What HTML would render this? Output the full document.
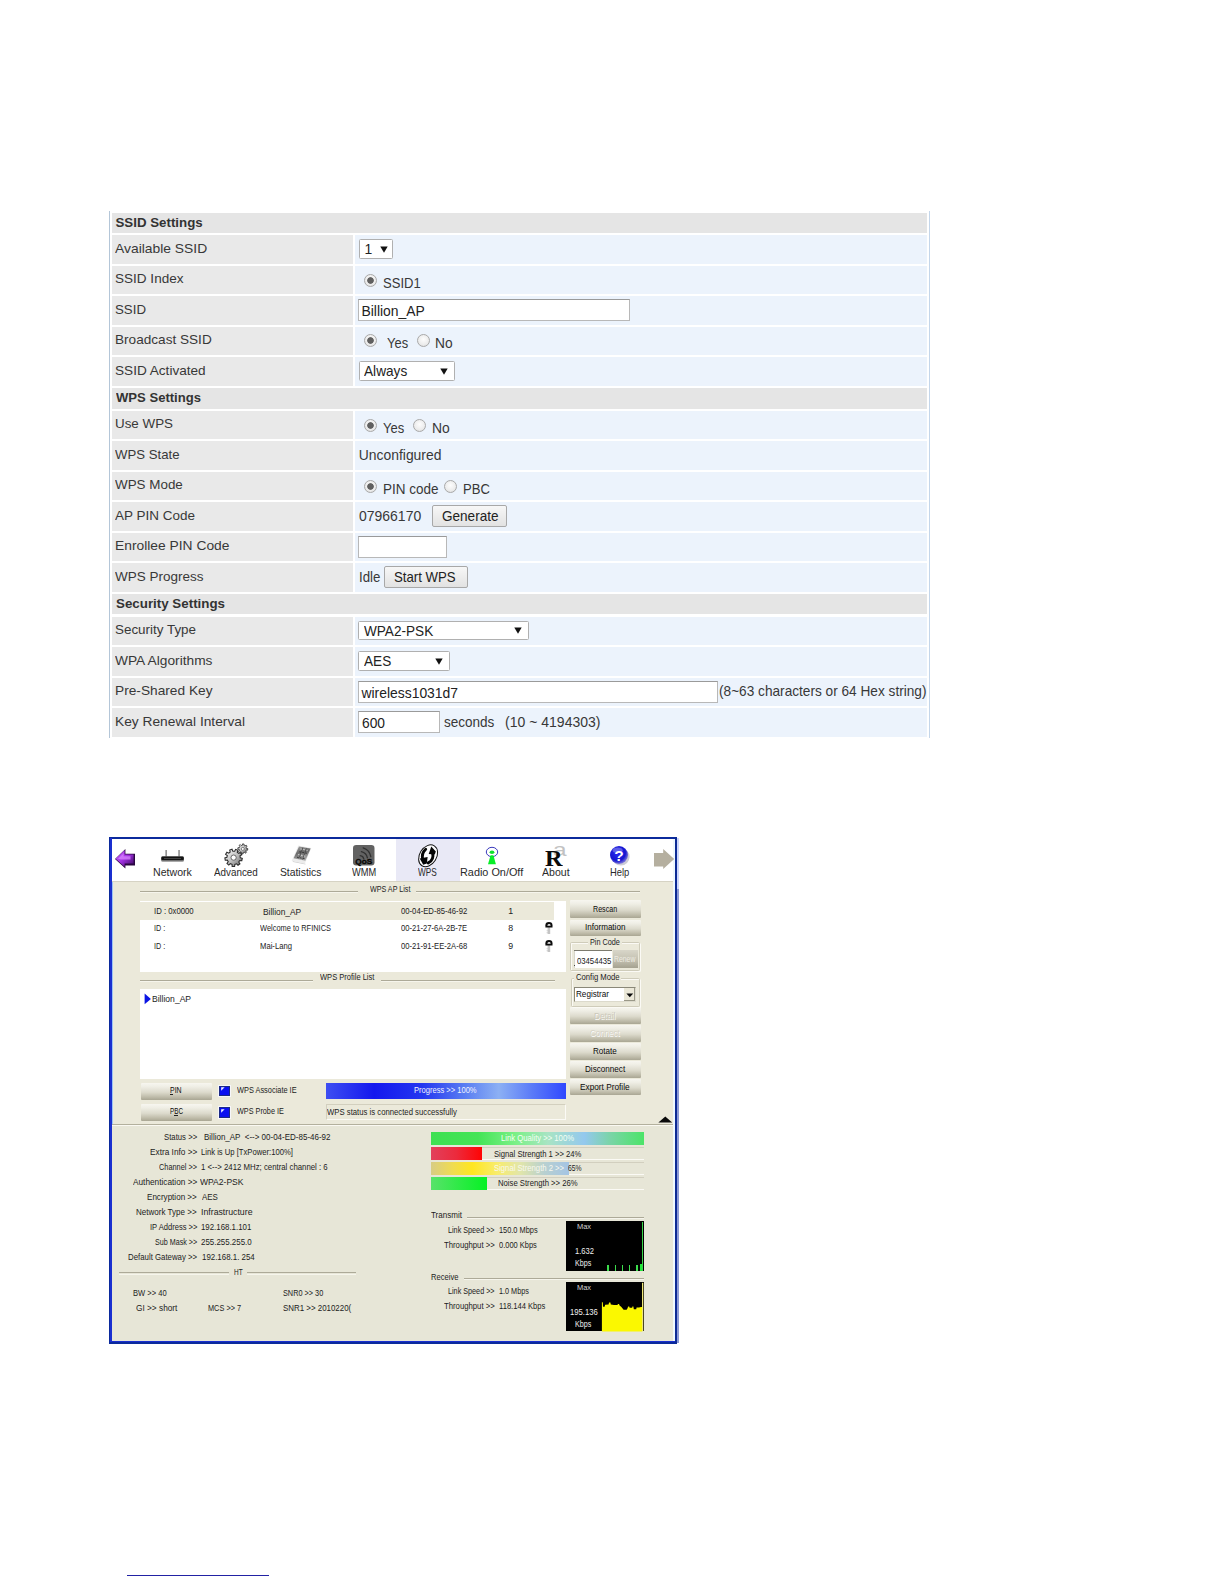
<!DOCTYPE html><html><head><meta charset="utf-8"><title>page</title><style>

html,body{margin:0;padding:0;background:#fff;}
body{width:1224px;height:1584px;position:relative;overflow:hidden;font-family:"Liberation Sans",sans-serif;}
div,span,svg{position:absolute;box-sizing:border-box;}
span{white-space:pre;transform-origin:0 50%;display:block;}

</style></head><body>
<div style="left:109.20px;top:211.00px;width:1.20px;height:527.00px;background:#b4c6d8;"></div>
<div style="left:929.00px;top:211.00px;width:1.00px;height:527.00px;background:#c4d6ea;"></div>
<div style="left:112.30px;top:212.70px;width:814.50px;height:20.60px;background:#e5e5e5;"></div>
<span style="left:115.50px;top:214.72px;font-size:13.3px;line-height:15.96px;color:#333;font-weight:bold;">SSID Settings</span>
<div style="left:112.30px;top:235.35px;width:241.00px;height:28.45px;background:#e9e9e9;"></div>
<div style="left:355.40px;top:235.35px;width:571.40px;height:28.45px;background:#ecf3fc;"></div>
<span style="left:115.00px;top:240.84px;font-size:13.6px;line-height:16.32px;color:#383838;transform:scaleX(1.0195);">Available SSID</span>
<div style="left:359.00px;top:239.30px;width:33.60px;height:19.50px;background:#fff;border:1px solid #b0b0b0;border-radius:1.5px;"></div>
<span style="left:364.50px;top:241.41px;font-size:13.9px;line-height:16.68px;color:#222;">1</span>
<svg style="left:380.00px;top:245.85px" width="8" height="7" viewBox="0 0 8 7"><path d="M0.3 0.5 L7.7 0.5 L4 6.7 Z" fill="#111"/></svg>
<div style="left:112.30px;top:265.85px;width:241.00px;height:28.45px;background:#e9e9e9;"></div>
<div style="left:355.40px;top:265.85px;width:571.40px;height:28.45px;background:#ecf3fc;"></div>
<span style="left:115.00px;top:271.34px;font-size:13.6px;line-height:16.32px;color:#383838;transform:scaleX(0.9961);">SSID Index</span>
<div style="left:364.10px;top:274.20px;width:13.2px;height:13.2px;border-radius:50%;border:1.1px solid #a9a9a9;background:radial-gradient(circle at 50% 50%,#606060 0,#606060 2.9px,rgba(96,96,96,0) 3.7px),radial-gradient(circle at 50% 40%,#fdfdfd 0%,#ececec 60%,#d6d6d6 100%);"></div>
<span style="left:382.50px;top:274.66px;font-size:13.9px;line-height:16.68px;color:#383838;transform:scaleX(0.9388);">SSID1</span>
<div style="left:112.30px;top:296.35px;width:241.00px;height:28.45px;background:#e9e9e9;"></div>
<div style="left:355.40px;top:296.35px;width:571.40px;height:28.45px;background:#ecf3fc;"></div>
<span style="left:115.00px;top:301.84px;font-size:13.6px;line-height:16.32px;color:#383838;transform:scaleX(0.9769);">SSID</span>
<div style="left:358.30px;top:299.20px;width:271.50px;height:22.20px;background:#fff;border:1px solid #b8b8b8;border-top-color:#9a9a9a;"></div>
<span style="left:361.50px;top:303.16px;font-size:13.9px;line-height:16.68px;color:#222;">Billion_AP</span>
<div style="left:112.30px;top:326.85px;width:241.00px;height:28.45px;background:#e9e9e9;"></div>
<div style="left:355.40px;top:326.85px;width:571.40px;height:28.45px;background:#ecf3fc;"></div>
<span style="left:115.00px;top:332.34px;font-size:13.6px;line-height:16.32px;color:#383838;">Broadcast SSID</span>
<div style="left:363.90px;top:334.20px;width:13.2px;height:13.2px;border-radius:50%;border:1.1px solid #a9a9a9;background:radial-gradient(circle at 50% 50%,#606060 0,#606060 2.9px,rgba(96,96,96,0) 3.7px),radial-gradient(circle at 50% 40%,#fdfdfd 0%,#ececec 60%,#d6d6d6 100%);"></div>
<span style="left:386.50px;top:335.46px;font-size:13.9px;line-height:16.68px;color:#383838;transform:scaleX(0.9307);">Yes</span>
<div style="left:416.80px;top:334.20px;width:13.2px;height:13.2px;border-radius:50%;border:1.1px solid #a9a9a9;background:radial-gradient(circle at 50% 40%,#fdfdfd 0%,#ececec 60%,#d6d6d6 100%);"></div>
<span style="left:435.40px;top:335.46px;font-size:13.9px;line-height:16.68px;color:#383838;transform:scaleX(0.9907);">No</span>
<div style="left:112.30px;top:357.35px;width:241.00px;height:28.45px;background:#e9e9e9;"></div>
<div style="left:355.40px;top:357.35px;width:571.40px;height:28.45px;background:#ecf3fc;"></div>
<span style="left:115.00px;top:362.84px;font-size:13.6px;line-height:16.32px;color:#383838;">SSID Activated</span>
<div style="left:358.80px;top:361.20px;width:96.40px;height:19.80px;background:#fff;border:1px solid #b0b0b0;border-radius:1.5px;"></div>
<span style="left:364.30px;top:363.46px;font-size:13.9px;line-height:16.68px;color:#222;transform:scaleX(0.9818);">Always</span>
<svg style="left:440.20px;top:367.90px" width="8" height="7" viewBox="0 0 8 7"><path d="M0.3 0.5 L7.7 0.5 L4 6.7 Z" fill="#111"/></svg>
<div style="left:112.30px;top:388.10px;width:814.50px;height:20.60px;background:#e5e5e5;"></div>
<span style="left:115.50px;top:390.12px;font-size:13.3px;line-height:15.96px;color:#333;font-weight:bold;transform:scaleX(0.9834);">WPS Settings</span>
<div style="left:112.30px;top:410.85px;width:241.00px;height:28.45px;background:#e9e9e9;"></div>
<div style="left:355.40px;top:410.85px;width:571.40px;height:28.45px;background:#ecf3fc;"></div>
<span style="left:115.00px;top:416.34px;font-size:13.6px;line-height:16.32px;color:#383838;transform:scaleX(0.9844);">Use WPS</span>
<div style="left:363.90px;top:418.50px;width:13.2px;height:13.2px;border-radius:50%;border:1.1px solid #a9a9a9;background:radial-gradient(circle at 50% 50%,#606060 0,#606060 2.9px,rgba(96,96,96,0) 3.7px),radial-gradient(circle at 50% 40%,#fdfdfd 0%,#ececec 60%,#d6d6d6 100%);"></div>
<span style="left:383.00px;top:419.66px;font-size:13.9px;line-height:16.68px;color:#383838;transform:scaleX(0.9351);">Yes</span>
<div style="left:412.90px;top:418.50px;width:13.2px;height:13.2px;border-radius:50%;border:1.1px solid #a9a9a9;background:radial-gradient(circle at 50% 40%,#fdfdfd 0%,#ececec 60%,#d6d6d6 100%);"></div>
<span style="left:432.00px;top:419.66px;font-size:13.9px;line-height:16.68px;color:#383838;">No</span>
<div style="left:112.30px;top:441.35px;width:241.00px;height:28.45px;background:#e9e9e9;"></div>
<div style="left:355.40px;top:441.35px;width:571.40px;height:28.45px;background:#ecf3fc;"></div>
<span style="left:115.00px;top:446.84px;font-size:13.6px;line-height:16.32px;color:#383838;transform:scaleX(0.9702);">WPS State</span>
<span style="left:358.80px;top:446.66px;font-size:13.9px;line-height:16.68px;color:#383838;">Unconfigured</span>
<div style="left:112.30px;top:471.85px;width:241.00px;height:28.45px;background:#e9e9e9;"></div>
<div style="left:355.40px;top:471.85px;width:571.40px;height:28.45px;background:#ecf3fc;"></div>
<span style="left:115.00px;top:477.34px;font-size:13.6px;line-height:16.32px;color:#383838;transform:scaleX(0.9862);">WPS Mode</span>
<div style="left:363.90px;top:480.00px;width:13.2px;height:13.2px;border-radius:50%;border:1.1px solid #a9a9a9;background:radial-gradient(circle at 50% 50%,#606060 0,#606060 2.9px,rgba(96,96,96,0) 3.7px),radial-gradient(circle at 50% 40%,#fdfdfd 0%,#ececec 60%,#d6d6d6 100%);"></div>
<span style="left:382.60px;top:480.66px;font-size:13.9px;line-height:16.68px;color:#383838;transform:scaleX(0.9695);">PIN code</span>
<div style="left:444.30px;top:480.00px;width:13.2px;height:13.2px;border-radius:50%;border:1.1px solid #a9a9a9;background:radial-gradient(circle at 50% 40%,#fdfdfd 0%,#ececec 60%,#d6d6d6 100%);"></div>
<span style="left:463.00px;top:480.66px;font-size:13.9px;line-height:16.68px;color:#383838;transform:scaleX(0.9383);">PBC</span>
<div style="left:112.30px;top:502.35px;width:241.00px;height:28.45px;background:#e9e9e9;"></div>
<div style="left:355.40px;top:502.35px;width:571.40px;height:28.45px;background:#ecf3fc;"></div>
<span style="left:115.00px;top:507.84px;font-size:13.6px;line-height:16.32px;color:#383838;transform:scaleX(0.9924);">AP PIN Code</span>
<span style="left:358.80px;top:507.96px;font-size:13.9px;line-height:16.68px;color:#383838;transform:scaleX(1.0063);">07966170</span>
<div style="left:432.00px;top:505.20px;width:75.30px;height:22.10px;background:linear-gradient(#f7f7f7,#e2e2e2);border:1px solid #a8a8a8;border-radius:2px;"></div>
<span style="left:441.50px;top:508.31px;font-size:13.9px;line-height:16.68px;color:#222;transform:scaleX(0.9755);">Generate</span>
<div style="left:112.30px;top:532.85px;width:241.00px;height:28.45px;background:#e9e9e9;"></div>
<div style="left:355.40px;top:532.85px;width:571.40px;height:28.45px;background:#ecf3fc;"></div>
<span style="left:115.00px;top:538.34px;font-size:13.6px;line-height:16.32px;color:#383838;transform:scaleX(1.0169);">Enrollee PIN Code</span>
<div style="left:358.30px;top:535.60px;width:88.40px;height:22.10px;background:#fff;border:1px solid #b8b8b8;border-top-color:#9a9a9a;"></div>
<div style="left:112.30px;top:563.35px;width:241.00px;height:28.45px;background:#e9e9e9;"></div>
<div style="left:355.40px;top:563.35px;width:571.40px;height:28.45px;background:#ecf3fc;"></div>
<span style="left:115.00px;top:568.84px;font-size:13.6px;line-height:16.32px;color:#383838;transform:scaleX(0.9928);">WPS Progress</span>
<span style="left:358.80px;top:568.86px;font-size:13.9px;line-height:16.68px;color:#383838;transform:scaleX(0.9551);">Idle</span>
<div style="left:384.40px;top:566.40px;width:83.60px;height:21.90px;background:linear-gradient(#f7f7f7,#e2e2e2);border:1px solid #a8a8a8;border-radius:2px;"></div>
<span style="left:393.80px;top:569.41px;font-size:13.9px;line-height:16.68px;color:#222;transform:scaleX(0.9515);">Start WPS</span>
<div style="left:112.30px;top:593.90px;width:814.50px;height:20.60px;background:#e5e5e5;"></div>
<span style="left:115.50px;top:595.92px;font-size:13.3px;line-height:15.96px;color:#333;font-weight:bold;transform:scaleX(1.0035);">Security Settings</span>
<div style="left:112.30px;top:616.85px;width:241.00px;height:28.45px;background:#e9e9e9;"></div>
<div style="left:355.40px;top:616.85px;width:571.40px;height:28.45px;background:#ecf3fc;"></div>
<span style="left:115.00px;top:622.34px;font-size:13.6px;line-height:16.32px;color:#383838;transform:scaleX(0.9865);">Security Type</span>
<div style="left:358.30px;top:620.50px;width:170.50px;height:19.70px;background:#fff;border:1px solid #b0b0b0;border-radius:1.5px;"></div>
<span style="left:363.80px;top:622.71px;font-size:13.9px;line-height:16.68px;color:#222;transform:scaleX(0.9779);">WPA2-PSK</span>
<svg style="left:513.80px;top:627.15px" width="8" height="7" viewBox="0 0 8 7"><path d="M0.3 0.5 L7.7 0.5 L4 6.7 Z" fill="#111"/></svg>
<div style="left:112.30px;top:647.35px;width:241.00px;height:28.45px;background:#e9e9e9;"></div>
<div style="left:355.40px;top:647.35px;width:571.40px;height:28.45px;background:#ecf3fc;"></div>
<span style="left:115.00px;top:652.84px;font-size:13.6px;line-height:16.32px;color:#383838;transform:scaleX(1.0109);">WPA Algorithms</span>
<div style="left:358.30px;top:651.20px;width:91.50px;height:19.80px;background:#fff;border:1px solid #b0b0b0;border-radius:1.5px;"></div>
<span style="left:363.80px;top:653.46px;font-size:13.9px;line-height:16.68px;color:#222;transform:scaleX(0.9785);">AES</span>
<svg style="left:434.80px;top:657.90px" width="8" height="7" viewBox="0 0 8 7"><path d="M0.3 0.5 L7.7 0.5 L4 6.7 Z" fill="#111"/></svg>
<div style="left:112.30px;top:677.85px;width:241.00px;height:28.45px;background:#e9e9e9;"></div>
<div style="left:355.40px;top:677.85px;width:571.40px;height:28.45px;background:#ecf3fc;"></div>
<span style="left:115.00px;top:683.34px;font-size:13.6px;line-height:16.32px;color:#383838;transform:scaleX(1.0081);">Pre-Shared Key</span>
<div style="left:358.30px;top:680.60px;width:359.30px;height:22.10px;background:#fff;border:1px solid #b8b8b8;border-top-color:#9a9a9a;"></div>
<span style="left:361.50px;top:684.51px;font-size:13.9px;line-height:16.68px;color:#222;">wireless1031d7</span>
<span style="left:718.80px;top:683.46px;font-size:13.9px;line-height:16.68px;color:#383838;transform:scaleX(0.9827);">(8~63 characters or 64 Hex string)</span>
<div style="left:112.30px;top:708.35px;width:241.00px;height:28.45px;background:#e9e9e9;"></div>
<div style="left:355.40px;top:708.35px;width:571.40px;height:28.45px;background:#ecf3fc;"></div>
<span style="left:115.00px;top:713.84px;font-size:13.6px;line-height:16.32px;color:#383838;transform:scaleX(1.0120);">Key Renewal Interval</span>
<div style="left:358.30px;top:710.70px;width:81.60px;height:22.10px;background:#fff;border:1px solid #b8b8b8;border-top-color:#9a9a9a;"></div>
<span style="left:361.50px;top:714.61px;font-size:13.9px;line-height:16.68px;color:#222;transform:scaleX(0.9919);">600</span>
<span style="left:443.80px;top:713.66px;font-size:13.9px;line-height:16.68px;color:#383838;transform:scaleX(0.9739);">seconds</span>
<span style="left:505.20px;top:713.66px;font-size:13.9px;line-height:16.68px;color:#383838;transform:scaleX(1.0092);">(10 ~ 4194303)</span>
<div style="left:127.00px;top:1574.80px;width:142.20px;height:1.50px;background:#2222a4;"></div>
<div style="left:109.00px;top:837.00px;width:568.20px;height:506.80px;background:#0b2a9c;"></div>
<div style="left:109.60px;top:838.00px;width:565.80px;height:504.00px;background:#1a2fd0;"></div>
<div style="left:112.00px;top:837.00px;width:565.20px;height:2.00px;background:#0b2a9c;"></div>
<div style="left:675.00px;top:837.00px;width:2.20px;height:506.80px;background:#0c2a94;"></div>
<div style="left:112.20px;top:839.00px;width:563.00px;height:502.40px;background:#ebe9da;"></div>
<div style="left:111.70px;top:839.00px;width:0.70px;height:502.40px;background:#9cc4f4;"></div>
<div style="left:112.20px;top:839.00px;width:563.00px;height:42.00px;background:#fff;"></div>
<div style="left:112.20px;top:880.80px;width:563.00px;height:1.00px;background:#d6d3c4;"></div>
<div style="left:396.20px;top:839.00px;width:63.40px;height:42.00px;background:#e9e9f6;"></div>
<div style="left:677.20px;top:871.80px;width:2.20px;height:1.00px;background:#4a5ca8;"></div>
<div style="left:677.20px;top:838.00px;width:1.60px;height:51.00px;background:#ccd6fb;"></div>
<div style="left:677.20px;top:889.00px;width:1.60px;height:454.40px;background:#8c9ad6;"></div>
<div style="left:673.40px;top:839.00px;width:1.80px;height:502.40px;background:#eef8ff;"></div>
<span style="left:152.90px;top:866.76px;font-size:10.4px;line-height:12.48px;color:#2a2a2a;transform:scaleX(1.0207);">Network</span>
<span style="left:214.30px;top:866.76px;font-size:10.4px;line-height:12.48px;color:#2a2a2a;transform:scaleX(0.9477);">Advanced</span>
<span style="left:279.90px;top:866.76px;font-size:10.4px;line-height:12.48px;color:#2a2a2a;">Statistics</span>
<span style="left:351.90px;top:866.76px;font-size:10.4px;line-height:12.48px;color:#2a2a2a;transform:scaleX(0.8922);">WMM</span>
<span style="left:418.40px;top:866.76px;font-size:10.4px;line-height:12.48px;color:#2a2a2a;transform:scaleX(0.7942);">WPS</span>
<span style="left:459.80px;top:866.76px;font-size:10.4px;line-height:12.48px;color:#2a2a2a;transform:scaleX(1.0454);">Radio On/Off</span>
<span style="left:541.60px;top:866.76px;font-size:10.4px;line-height:12.48px;color:#2a2a2a;transform:scaleX(1.0163);">About</span>
<span style="left:609.70px;top:866.76px;font-size:10.4px;line-height:12.48px;color:#2a2a2a;transform:scaleX(0.9029);">Help</span>
<svg style="left:113px;top:847px" width="24" height="24" viewBox="0 0 24 24"><defs><linearGradient id="pa" x1="0" y1="0" x2="1" y2="1"><stop offset="0" stop-color="#d070ff"/><stop offset="0.5" stop-color="#a030e0"/><stop offset="1" stop-color="#38085c"/></linearGradient></defs>
<path d="M2 12 L12.4 2 L12.4 6.8 L22 6.8 L22 18.6 L12.4 18.6 L12.4 21.6 Z" fill="#2a0640"/>
<path d="M2.6 11.8 L11.6 3.2 L11.6 7.6 L20.6 7.6 L20.6 16.6 L11.6 16.6 L11.6 19.8 Z" fill="url(#pa)"/>
<path d="M5 11.8 L10.6 6.6 L10.6 9.2 L17.5 9.2 L17.5 12.5 L8 12.5 Z" fill="#d884ff" opacity="0.75"/></svg>
<svg style="left:159px;top:848px" width="28" height="16" viewBox="0 0 28 16"><rect x="6.4" y="2" width="1.5" height="7" fill="#8a8a8a"/><rect x="19.3" y="2" width="1.5" height="7" fill="#8a8a8a"/>
<rect x="2.1" y="8.3" width="22.9" height="5.5" rx="1.6" fill="#8e8e8e"/><rect x="2.3" y="8.5" width="22.5" height="3.8" rx="1.4" fill="#151515"/><rect x="5" y="10" width="17" height="0.9" fill="#4a4a4a"/></svg>
<svg style="left:220px;top:839px" width="32" height="32" viewBox="0 0 32 32"><defs><linearGradient id="gg" x1="0" y1="0" x2="1" y2="1"><stop offset="0" stop-color="#ffffff"/><stop offset="0.5" stop-color="#c2c2c2"/><stop offset="1" stop-color="#666666"/></linearGradient></defs>
<path d="M26.37 9.41 L27.79 9.61 L27.64 11.17 L26.20 11.09 L25.67 12.08 L26.53 13.23 L25.32 14.22 L24.37 13.14 L23.29 13.47 L23.09 14.89 L21.53 14.74 L21.61 13.30 L20.62 12.77 L19.47 13.63 L18.48 12.42 L19.56 11.47 L19.23 10.39 L17.81 10.19 L17.96 8.63 L19.40 8.71 L19.93 7.72 L19.07 6.57 L20.28 5.58 L21.23 6.66 L22.31 6.33 L22.51 4.91 L24.07 5.06 L23.99 6.50 L24.98 7.03 L26.13 6.17 L27.12 7.38 L26.04 8.33 Z" fill="url(#gg)" stroke="#3a3a3a" stroke-width="0.9"/><circle cx="22.8" cy="9.9" r="1.5" fill="#fff" stroke="#444" stroke-width="0.6"/>
<path d="M20.30 18.74 L22.28 19.32 L21.80 21.70 L19.75 21.47 L18.77 23.06 L19.92 24.78 L18.02 26.29 L16.59 24.79 L14.83 25.39 L14.59 27.44 L12.17 27.38 L12.04 25.32 L10.30 24.63 L8.80 26.06 L6.99 24.45 L8.22 22.79 L7.33 21.15 L5.26 21.28 L4.90 18.88 L6.91 18.40 L7.28 16.57 L5.62 15.34 L6.88 13.27 L8.74 14.19 L10.20 13.03 L9.71 11.02 L12.01 10.25 L12.84 12.14 L14.70 12.19 L15.62 10.34 L17.88 11.22 L17.29 13.21 L18.69 14.45 L20.59 13.62 L21.75 15.75 L20.02 16.89 Z" fill="url(#gg)" stroke="#2c2c2c" stroke-width="1.1"/><circle cx="13.6" cy="18.6" r="2.6" fill="#fff" stroke="#3a3a3a" stroke-width="0.7"/></svg>
<svg style="left:288px;top:842px" width="28" height="26" viewBox="0 0 28 26"><defs><linearGradient id="sg" x1="0" y1="0" x2="0.3" y2="1"><stop offset="0" stop-color="#a2a2a2"/><stop offset="0.5" stop-color="#6c6c6c"/><stop offset="1" stop-color="#a8a8a8"/></linearGradient></defs>
<path d="M5.2 19.9 L17.6 22.6 L17.2 21.6 L4.4 18.8 Z" fill="#cfcfcf"/>
<path d="M10.3 3.6 L23.4 6 L16.8 21.8 L3.6 18.9 Z" fill="#ececec"/>
<path d="M11 4.4 L22.6 6.5 L17.4 18.8 L5.6 16.3 Z" fill="url(#sg)"/>
<path d="M12.5 7 L20 8.4 M10.2 12.6 L17.8 14.2" stroke="#e0e0e0" stroke-width="1" stroke-dasharray="1.4 1.5" fill="none"/>
<path d="M11.3 9.8 L19 11.3 M9 15.2 L16.6 16.8" stroke="#3a3a3a" stroke-width="1.1" stroke-dasharray="1.8 1.2" fill="none"/>
<path d="M14.8 5.6 L10.8 16.6 M18.6 6.4 L14.4 17.6" stroke="#404040" stroke-width="0.9" fill="none" opacity="0.75"/></svg>
<svg style="left:352px;top:844px" width="24" height="23" viewBox="0 0 24 23"><rect x="1" y="0.9" width="21.5" height="20.5" rx="3.2" fill="#626262"/>
<g fill="none" stroke="#303030" stroke-width="1.3" stroke-linecap="round"><path d="M8.2 11.6 A4.2 4.2 0 0 1 11.8 14.8"/><path d="M9.4 7.6 A8 8 0 0 1 15.4 13.8"/><path d="M11.2 3.8 A11.6 11.6 0 0 1 18.8 12.6"/></g>
<text x="11.8" y="19.9" font-family="Liberation Sans" font-weight="bold" font-size="8" text-anchor="middle" fill="#060606" stroke="#060606" stroke-width="0.3" textLength="17.0" lengthAdjust="spacingAndGlyphs">QoS</text></svg>
<svg style="left:415px;top:842px" width="26" height="27" viewBox="0 0 26 27"><g transform="rotate(32 13.1 13.8)"><ellipse cx="13.1" cy="13.8" rx="8.5" ry="11.7" fill="#fff" fill-opacity="0.9" stroke="#141414" stroke-width="1.0"/></g>
<path d="M10.7 7.3 Q6.0 11.6 7.9 17.6" stroke="#050505" stroke-width="2.9" fill="none" stroke-linecap="round"/>
<path d="M4.7 16.6 L12.6 15.0 L11.8 21.4 L8.2 22.8 Z" fill="#050505"/>
<path d="M13.2 20.9 Q19.4 18.0 17.5 10.4" stroke="#050505" stroke-width="2.9" fill="none" stroke-linecap="round"/>
<path d="M16.3 4.6 L20.8 9.6 L19.8 12.6 L13.7 11.9 Z" fill="#050505"/></svg>
<svg style="left:483px;top:844px" width="18" height="24" viewBox="0 0 18 24"><ellipse cx="9" cy="8" rx="5.7" ry="4.7" fill="none" stroke="#2424b4" stroke-width="0.9"/><ellipse cx="9" cy="8.2" rx="2.4" ry="1.7" fill="#10e030"/><path d="M7.6 11.2 L10.4 11.2 L12.9 20.2 L5 20.2 Z" fill="#08ee28"/></svg>
<span style="left:552.60px;top:838.50px;font-size:18.5px;line-height:22.20px;color:#c2c2c2;transform:scaleX(1.3208);">a</span>
<span style="left:545.20px;top:845.20px;font-size:23.0px;line-height:27.60px;color:#0a0a0a;font-weight:bold;font-family:'Liberation Serif',serif;transform:scaleX(1.0586);">R</span>
<svg style="left:607px;top:843px" width="26" height="26" viewBox="0 0 26 26"><defs><radialGradient id="hg" cx="0.42" cy="0.38" r="0.62"><stop offset="0" stop-color="#2a2af4"/><stop offset="0.7" stop-color="#1616d0"/><stop offset="1" stop-color="#7a74d8"/></radialGradient></defs>
<ellipse cx="13.8" cy="13.8" rx="8.8" ry="8.6" fill="#b8b8c4" opacity="0.7"/><circle cx="12" cy="12" r="9" fill="url(#hg)"/><ellipse cx="10.6" cy="7.2" rx="5" ry="2.6" fill="#fff" opacity="0.28"/>
<text x="12" y="17.6" font-family="Liberation Sans" font-weight="bold" font-size="15.5" text-anchor="middle" fill="#fff">?</text></svg>
<svg style="left:652px;top:847px" width="24" height="24" viewBox="0 0 24 24"><path d="M2 5.9 L11.2 5.9 L11.2 1.9 L22.2 12 L11.2 22 L11.2 19.6 L2 19.6 Z" fill="#b5af9f"/></svg>
<div style="left:140.00px;top:891.05px;width:218.00px;height:1.05px;background:#adaa98;"></div>
<div style="left:140.00px;top:892.10px;width:218.00px;height:0.80px;background:#f6f5ec;"></div>
<div style="left:416.00px;top:891.05px;width:224.00px;height:1.05px;background:#adaa98;"></div>
<div style="left:416.00px;top:892.10px;width:224.00px;height:0.80px;background:#f6f5ec;"></div>
<span style="left:369.60px;top:884.32px;font-size:8.8px;line-height:10.56px;color:#1c1c1c;transform:scaleX(0.8126);">WPS AP List</span>
<div style="left:140.00px;top:979.85px;width:173.00px;height:1.05px;background:#adaa98;"></div>
<div style="left:140.00px;top:980.90px;width:173.00px;height:0.80px;background:#f6f5ec;"></div>
<div style="left:381.00px;top:979.85px;width:174.00px;height:1.05px;background:#adaa98;"></div>
<div style="left:381.00px;top:980.90px;width:174.00px;height:0.80px;background:#f6f5ec;"></div>
<span style="left:320.30px;top:972.02px;font-size:8.8px;line-height:10.56px;color:#1c1c1c;transform:scaleX(0.8559);">WPS Profile List</span>
<div style="left:140.00px;top:900.90px;width:425.90px;height:71.30px;background:#fff;"></div>
<div style="left:140.00px;top:901.60px;width:413.60px;height:18.20px;background:#ebe9da;"></div>
<span style="left:153.60px;top:905.72px;font-size:8.8px;line-height:10.56px;color:#1c1c1c;transform:scaleX(0.8822);">ID : 0x0000</span>
<span style="left:262.50px;top:907.12px;font-size:8.8px;line-height:10.56px;color:#1c1c1c;transform:scaleX(0.9524);">Billion_AP</span>
<span style="left:400.80px;top:905.72px;font-size:8.8px;line-height:10.56px;color:#1c1c1c;transform:scaleX(0.8734);">00-04-ED-85-46-92</span>
<span style="left:508.20px;top:905.72px;font-size:8.8px;line-height:10.56px;color:#1c1c1c;">1</span>
<span style="left:153.60px;top:923.12px;font-size:8.8px;line-height:10.56px;color:#1c1c1c;transform:scaleX(0.8183);">ID :</span>
<span style="left:260.00px;top:923.12px;font-size:8.8px;line-height:10.56px;color:#1c1c1c;transform:scaleX(0.8460);">Welcome to RFINICS</span>
<span style="left:400.80px;top:923.12px;font-size:8.8px;line-height:10.56px;color:#1c1c1c;transform:scaleX(0.8678);">00-21-27-6A-2B-7E</span>
<span style="left:508.20px;top:923.12px;font-size:8.8px;line-height:10.56px;color:#1c1c1c;">8</span>
<span style="left:153.60px;top:940.92px;font-size:8.8px;line-height:10.56px;color:#1c1c1c;transform:scaleX(0.8183);">ID :</span>
<span style="left:260.00px;top:940.92px;font-size:8.8px;line-height:10.56px;color:#1c1c1c;transform:scaleX(0.8722);">Mai-Lang</span>
<span style="left:400.80px;top:940.92px;font-size:8.8px;line-height:10.56px;color:#1c1c1c;transform:scaleX(0.8678);">00-21-91-EE-2A-68</span>
<span style="left:508.20px;top:940.92px;font-size:8.8px;line-height:10.56px;color:#1c1c1c;">9</span>
<svg style="left:543.5px;top:920.8px" width="10" height="15" viewBox="0 0 10 15"><rect x="3.6" y="5.6" width="2.6" height="7.4" fill="#c4c4c4"/><rect x="2.6" y="9.2" width="1.4" height="1" fill="#cfcfcf"/><rect x="2.6" y="11.2" width="1.4" height="1" fill="#cfcfcf"/><path d="M1.4 6.6 L1.4 4.2 A3.55 3.3 0 0 1 8.5 4.2 L8.5 6.6 Z" fill="#0c0c0c"/><path d="M3.4 4.5 A1.6 1.4 0 0 1 6.6 4.4 L6.6 4.8 L3.4 4.8 Z" fill="#eeeeee"/></svg>
<svg style="left:543.5px;top:938.8px" width="10" height="15" viewBox="0 0 10 15"><rect x="3.6" y="5.6" width="2.6" height="7.4" fill="#c4c4c4"/><rect x="2.6" y="9.2" width="1.4" height="1" fill="#cfcfcf"/><rect x="2.6" y="11.2" width="1.4" height="1" fill="#cfcfcf"/><path d="M1.4 6.6 L1.4 4.2 A3.55 3.3 0 0 1 8.5 4.2 L8.5 6.6 Z" fill="#0c0c0c"/><path d="M3.4 4.5 A1.6 1.4 0 0 1 6.6 4.4 L6.6 4.8 L3.4 4.8 Z" fill="#eeeeee"/></svg>
<div style="left:140.00px;top:989.40px;width:425.90px;height:89.80px;background:#fff;"></div>
<svg style="left:143.6px;top:993.4px" width="8" height="12" viewBox="0 0 8 12"><path d="M0.6 0.6 L6.9 5.9 L0.6 11.3 Z" fill="#0a14e4"/></svg>
<span style="left:152.20px;top:993.72px;font-size:8.8px;line-height:10.56px;color:#1c1c1c;transform:scaleX(0.9748);">Billion_AP</span>
<div style="left:570.00px;top:900.40px;width:71.00px;height:17.60px;background:linear-gradient(#f7f6f0 0%,#efeee5 22%,#dcdacc 55%,#bfbcaa 82%,#a9a693 100%);border-radius:1px;"></div>
<span style="left:592.70px;top:904.00px;font-size:9.0px;line-height:10.80px;color:#0c0c0c;transform:scaleX(0.7898);">Rescan</span>
<div style="left:570.00px;top:919.60px;width:71.00px;height:16.20px;background:linear-gradient(#f7f6f0 0%,#efeee5 22%,#dcdacc 55%,#bfbcaa 82%,#a9a693 100%);border-radius:1px;"></div>
<span style="left:584.70px;top:921.90px;font-size:9.0px;line-height:10.80px;color:#0c0c0c;transform:scaleX(0.8972);">Information</span>
<div style="left:570.00px;top:1007.30px;width:71.00px;height:16.90px;background:linear-gradient(#f7f6f0 0%,#efeee5 22%,#dcdacc 55%,#bfbcaa 82%,#a9a693 100%);border-radius:1px;"></div>
<span style="left:594.20px;top:1010.65px;font-size:9.0px;line-height:10.80px;color:#cbc8ba;transform:scaleX(0.9298);text-shadow:0.7px 0.7px 0 #fbfaf6;">Detail</span>
<div style="left:570.00px;top:1025.10px;width:71.00px;height:17.30px;background:linear-gradient(#f7f6f0 0%,#efeee5 22%,#dcdacc 55%,#bfbcaa 82%,#a9a693 100%);border-radius:1px;"></div>
<span style="left:589.80px;top:1028.35px;font-size:9.0px;line-height:10.80px;color:#d6d3c6;transform:scaleX(0.8828);text-shadow:0.7px 0.7px 0 #ffffff;">Connect</span>
<div style="left:570.00px;top:1043.30px;width:71.00px;height:16.70px;background:linear-gradient(#f7f6f0 0%,#efeee5 22%,#dcdacc 55%,#bfbcaa 82%,#a9a693 100%);border-radius:1px;"></div>
<span style="left:592.80px;top:1046.25px;font-size:9.0px;line-height:10.80px;color:#0c0c0c;transform:scaleX(0.8971);">Rotate</span>
<div style="left:570.00px;top:1060.90px;width:71.00px;height:16.90px;background:linear-gradient(#f7f6f0 0%,#efeee5 22%,#dcdacc 55%,#bfbcaa 82%,#a9a693 100%);border-radius:1px;"></div>
<span style="left:584.80px;top:1063.95px;font-size:9.0px;line-height:10.80px;color:#0c0c0c;transform:scaleX(0.9027);">Disconnect</span>
<div style="left:570.00px;top:1078.80px;width:71.00px;height:16.70px;background:linear-gradient(#f7f6f0 0%,#efeee5 22%,#dcdacc 55%,#bfbcaa 82%,#a9a693 100%);border-radius:1px;"></div>
<span style="left:579.80px;top:1081.75px;font-size:9.0px;line-height:10.80px;color:#0c0c0c;transform:scaleX(0.9180);">Export Profile</span>
<div style="left:140.50px;top:1082.60px;width:71.50px;height:17.00px;background:linear-gradient(#f7f6f0 0%,#efeee5 22%,#dcdacc 55%,#bfbcaa 82%,#a9a693 100%);border-radius:1px;"></div>
<span style="left:170.00px;top:1085.10px;font-size:9.0px;line-height:10.80px;color:#0c0c0c;transform:scaleX(0.7725);">PIN</span>
<div style="left:140.50px;top:1103.90px;width:71.50px;height:16.80px;background:linear-gradient(#f7f6f0 0%,#efeee5 22%,#dcdacc 55%,#bfbcaa 82%,#a9a693 100%);border-radius:1px;"></div>
<span style="left:169.60px;top:1106.30px;font-size:9.0px;line-height:10.80px;color:#0c0c0c;transform:scaleX(0.7021);">PBC</span>
<div style="left:170.00px;top:1094.00px;width:3.40px;height:0.70px;background:#222;"></div>
<div style="left:173.60px;top:1115.00px;width:4.00px;height:0.70px;background:#222;"></div>
<div style="left:570.40px;top:942.40px;width:69.40px;height:28.40px;border:1px solid #cfccba;box-shadow:inset 1px 1px 0 #fbfaf5, 1px 1px 0 #fbfaf5;border-radius:1.5px;"></div>
<div style="left:587.60px;top:940.00px;width:34.40px;height:5.00px;background:#ebe9da;"></div>
<span style="left:589.80px;top:936.60px;font-size:9.0px;line-height:10.80px;color:#1c1c1c;transform:scaleX(0.8074);">Pin Code</span>
<div style="left:573.80px;top:950.60px;width:37.80px;height:17.40px;background:#fff;"></div>
<div style="left:573.80px;top:950.40px;width:37.80px;height:1.00px;background:#7c7a6e;"></div>
<div style="left:573.60px;top:950.60px;width:0.80px;height:17.40px;background:#d8d6ca;"></div>
<div style="left:574.00px;top:964.60px;width:0.90px;height:1.60px;background:#444;"></div>
<span style="left:576.90px;top:954.84px;font-size:9.6px;line-height:11.52px;color:#1a1a1a;transform:scaleX(0.8035);">03454435</span>
<div style="left:613.0px;top:950.4px;width:24.9px;height:17.4px;background:linear-gradient(#d8d6c9,#c4c1b1 55%,#a5a290);"></div>
<span style="left:614.40px;top:953.92px;font-size:8.8px;line-height:10.56px;color:#edebe2;transform:scaleX(0.7813);">Renew</span>
<div style="left:570.60px;top:978.00px;width:69.20px;height:28.90px;border:1px solid #cfccba;box-shadow:inset 1px 1px 0 #fbfaf5, 1px 1px 0 #fbfaf5;border-radius:1.5px;"></div>
<div style="left:573.60px;top:974.00px;width:47.40px;height:7.00px;background:#ebe9da;"></div>
<span style="left:575.60px;top:971.90px;font-size:9.0px;line-height:10.80px;color:#1c1c1c;transform:scaleX(0.8544);">Config Mode</span>
<div style="left:573.8px;top:986.6px;width:62.3px;height:15.4px;background:#fff;border:1px solid #8a8878;border-right-color:#dcdacc;border-bottom-color:#dcdacc;"></div>
<div style="left:624.0px;top:988.0px;width:11.3px;height:12.9px;background:#ebe8d8;border-right:1px solid #9a9888;border-bottom:1px solid #9a9888;"></div>
<svg style="left:626.2px;top:992.6px" width="8" height="5" viewBox="0 0 8 5"><path d="M0.4 0.5 L7.2 0.5 L3.8 4.3 Z" fill="#0a0a0a"/></svg>
<span style="left:575.90px;top:989.32px;font-size:8.8px;line-height:10.56px;color:#0c0c0c;transform:scaleX(0.9247);">Registrar</span>
<div style="left:218.00px;top:1084.60px;width:12.8px;height:12.6px;background:#f6f6fa;"></div>
<div style="left:219.00px;top:1085.60px;width:10.8px;height:10.6px;background:#0a10f0;border:1.2px solid #1c2a84;"></div>
<svg style="left:220.60px;top:1087.20px" width="5" height="5" viewBox="0 0 5 5"><path d="M0.2 0.2 L3.6 0.2 L0.2 3.8 Z" fill="#f0f2ff"/></svg>
<div style="left:218.00px;top:1106.20px;width:12.8px;height:12.6px;background:#f6f6fa;"></div>
<div style="left:219.00px;top:1107.20px;width:10.8px;height:10.6px;background:#0a10f0;border:1.2px solid #1c2a84;"></div>
<svg style="left:220.60px;top:1108.80px" width="5" height="5" viewBox="0 0 5 5"><path d="M0.2 0.2 L3.6 0.2 L0.2 3.8 Z" fill="#f0f2ff"/></svg>
<span style="left:236.60px;top:1084.72px;font-size:8.8px;line-height:10.56px;color:#1c1c1c;transform:scaleX(0.8407);">WPS Associate IE</span>
<span style="left:236.60px;top:1106.12px;font-size:8.8px;line-height:10.56px;color:#1c1c1c;transform:scaleX(0.8251);">WPS Probe IE</span>
<div style="left:325.6px;top:1082.6px;width:240.3px;height:16.2px;background:linear-gradient(90deg,#3e4ef2 0%,#1418ee 20%,#2436f0 40%,#5a7ef2 58%,#8cb0f4 72%,#5a7af8 86%,#3048ff 100%);"></div>
<span style="left:413.60px;top:1085.12px;font-size:8.8px;line-height:10.56px;color:#f2f4ff;transform:scaleX(0.8590);">Progress &gt;&gt; 100%</span>
<div style="left:325.6px;top:1103.6px;width:240.3px;height:16.0px;border:1px solid #d2cfbe;border-right-color:#fbfaf5;border-bottom-color:#fbfaf5;"></div>
<span style="left:326.80px;top:1106.72px;font-size:8.8px;line-height:10.56px;color:#1c1c1c;transform:scaleX(0.8791);">WPS status is connected successfully</span>
<svg style="left:657.6px;top:1116.0px" width="15" height="7" viewBox="0 0 15 7"><path d="M0.4 6.6 L7.3 0.4 L14.2 6.6 Z" fill="#0a0a0a"/></svg>
<div style="left:112.40px;top:1125.00px;width:561.00px;height:216.40px;background:#e7e6d7;"></div>
<div style="left:112.40px;top:1124.00px;width:561.00px;height:0.90px;background:#b3b09d;"></div>
<div style="left:112.40px;top:1124.90px;width:561.00px;height:0.90px;background:#faf9f2;"></div>
<span style="left:163.80px;top:1132.32px;font-size:8.8px;line-height:10.56px;color:#1c1c1c;transform:scaleX(0.8813);">Status &gt;&gt;</span>
<span style="left:203.50px;top:1132.32px;font-size:8.8px;line-height:10.56px;color:#1c1c1c;transform:scaleX(0.9087);">Billion_AP  &lt;--&gt; 00-04-ED-85-46-92</span>
<span style="left:149.60px;top:1147.12px;font-size:8.8px;line-height:10.56px;color:#1c1c1c;transform:scaleX(0.9409);">Extra Info &gt;&gt;</span>
<span style="left:201.30px;top:1147.12px;font-size:8.8px;line-height:10.56px;color:#1c1c1c;transform:scaleX(0.8702);">Link is Up [TxPower:100%]</span>
<span style="left:159.00px;top:1162.02px;font-size:8.8px;line-height:10.56px;color:#1c1c1c;transform:scaleX(0.8352);">Channel &gt;&gt;</span>
<span style="left:201.30px;top:1162.02px;font-size:8.8px;line-height:10.56px;color:#1c1c1c;transform:scaleX(0.8873);">1 &lt;--&gt; 2412 MHz; central channel : 6</span>
<span style="left:132.70px;top:1177.22px;font-size:8.8px;line-height:10.56px;color:#1c1c1c;transform:scaleX(0.9389);">Authentication &gt;&gt;</span>
<span style="left:200.00px;top:1177.04px;font-size:9.1px;line-height:10.92px;color:#1c1c1c;transform:scaleX(0.9390);">WPA2-PSK</span>
<span style="left:147.20px;top:1192.22px;font-size:8.8px;line-height:10.56px;color:#1c1c1c;transform:scaleX(0.9174);">Encryption &gt;&gt;</span>
<span style="left:202.30px;top:1192.04px;font-size:9.1px;line-height:10.92px;color:#1c1c1c;transform:scaleX(0.8735);">AES</span>
<span style="left:136.40px;top:1207.12px;font-size:8.8px;line-height:10.56px;color:#1c1c1c;transform:scaleX(0.9134);">Network Type &gt;&gt;</span>
<span style="left:201.30px;top:1207.12px;font-size:8.8px;line-height:10.56px;color:#1c1c1c;transform:scaleX(0.9937);">Infrastructure</span>
<span style="left:149.60px;top:1222.12px;font-size:8.8px;line-height:10.56px;color:#1c1c1c;transform:scaleX(0.8601);">IP Address &gt;&gt;</span>
<span style="left:201.30px;top:1222.12px;font-size:8.8px;line-height:10.56px;color:#1c1c1c;transform:scaleX(0.8940);">192.168.1.101</span>
<span style="left:154.80px;top:1236.72px;font-size:8.8px;line-height:10.56px;color:#1c1c1c;transform:scaleX(0.8140);">Sub Mask &gt;&gt;</span>
<span style="left:201.30px;top:1236.72px;font-size:8.8px;line-height:10.56px;color:#1c1c1c;transform:scaleX(0.9011);">255.255.255.0</span>
<span style="left:127.80px;top:1251.52px;font-size:8.8px;line-height:10.56px;color:#1c1c1c;transform:scaleX(0.8899);">Default Gateway &gt;&gt;</span>
<span style="left:202.30px;top:1251.52px;font-size:8.8px;line-height:10.56px;color:#1c1c1c;transform:scaleX(0.8977);">192.168.1. 254</span>
<div style="left:119.20px;top:1272.45px;width:109.60px;height:1.05px;background:#adaa98;"></div>
<div style="left:119.20px;top:1273.50px;width:109.60px;height:0.80px;background:#f6f5ec;"></div>
<div style="left:247.20px;top:1272.45px;width:109.00px;height:1.05px;background:#adaa98;"></div>
<div style="left:247.20px;top:1273.50px;width:109.00px;height:0.80px;background:#f6f5ec;"></div>
<span style="left:233.70px;top:1267.32px;font-size:8.8px;line-height:10.56px;color:#1c1c1c;transform:scaleX(0.7329);">HT</span>
<span style="left:132.60px;top:1287.72px;font-size:8.8px;line-height:10.56px;color:#1c1c1c;transform:scaleX(0.8588);">BW &gt;&gt; 40</span>
<span style="left:282.80px;top:1287.72px;font-size:8.8px;line-height:10.56px;color:#1c1c1c;transform:scaleX(0.8302);">SNR0 &gt;&gt; 30</span>
<span style="left:136.10px;top:1302.72px;font-size:8.8px;line-height:10.56px;color:#1c1c1c;transform:scaleX(0.9406);">GI &gt;&gt; short</span>
<span style="left:207.60px;top:1302.72px;font-size:8.8px;line-height:10.56px;color:#1c1c1c;transform:scaleX(0.8357);">MCS &gt;&gt; 7</span>
<span style="left:282.80px;top:1302.72px;font-size:8.8px;line-height:10.56px;color:#1c1c1c;transform:scaleX(0.8996);">SNR1 &gt;&gt; 2010220(</span>
<div style="left:430.9px;top:1131.9px;width:213.4px;height:13.3px;background:linear-gradient(90deg,#3ee052 0%,#44e456 22%,#7cf088 40%,#a8e4c4 55%,#94c8ee 72%,#7ad4a8 84%,#4ce468 100%);"></div>
<span style="left:501.00px;top:1133.42px;font-size:8.8px;line-height:10.56px;color:#f4fff4;transform:scaleX(0.8729);">Link Quality &gt;&gt; 100%</span>
<div style="left:430.9px;top:1147.40px;width:213.4px;height:12.80px;border-top:1px solid #d2cfbf;border-bottom:1px solid #fbfaf5;"></div>
<div style="left:430.9px;top:1147.4px;width:51.5px;height:12.8px;background:linear-gradient(90deg,#e2405c 0%,#ec2a3c 50%,#ff0404 100%);"></div>
<span style="left:493.80px;top:1148.52px;font-size:8.8px;line-height:10.56px;color:#1c1c1c;transform:scaleX(0.8717);">Signal Strength 1 &gt;&gt; 24%</span>
<div style="left:430.9px;top:1161.90px;width:213.4px;height:13.10px;border-top:1px solid #d2cfbf;border-bottom:1px solid #fbfaf5;"></div>
<div style="left:430.9px;top:1161.9px;width:137.9px;height:13.1px;background:linear-gradient(90deg,#d8cc84 0%,#f0dc50 16%,#ffe620 30%,#f8ec6c 48%,#e2e6a8 64%,#b8d0d0 82%,#a4c4e4 100%);"></div>
<span style="left:493.80px;top:1163.12px;font-size:8.8px;line-height:10.56px;color:#f8f8ee;transform:scaleX(0.8735);">Signal Strength 2 &gt;&gt; </span>
<span style="left:567.60px;top:1163.12px;font-size:8.8px;line-height:10.56px;color:#1c1c1c;transform:scaleX(0.7723);">65%</span>
<div style="left:430.9px;top:1177.20px;width:213.4px;height:12.70px;border-top:1px solid #d2cfbf;border-bottom:1px solid #fbfaf5;"></div>
<div style="left:430.9px;top:1177.2px;width:56.0px;height:12.7px;background:linear-gradient(90deg,#58e26a 0%,#2eea46 50%,#06f224 100%);"></div>
<span style="left:497.70px;top:1178.32px;font-size:8.8px;line-height:10.56px;color:#1c1c1c;transform:scaleX(0.8750);">Noise Strength &gt;&gt; 26%</span>
<span style="left:430.90px;top:1210.12px;font-size:8.8px;line-height:10.56px;color:#1c1c1c;transform:scaleX(0.9118);">Transmit</span>
<div style="left:466.80px;top:1216.85px;width:177.20px;height:1.05px;background:#adaa98;"></div>
<div style="left:466.80px;top:1217.90px;width:177.20px;height:0.80px;background:#f6f5ec;"></div>
<span style="left:447.60px;top:1225.02px;font-size:8.8px;line-height:10.56px;color:#1c1c1c;transform:scaleX(0.8211);">Link Speed &gt;&gt;</span>
<span style="left:499.40px;top:1225.02px;font-size:8.8px;line-height:10.56px;color:#1c1c1c;transform:scaleX(0.8394);">150.0 Mbps</span>
<span style="left:443.50px;top:1239.82px;font-size:8.8px;line-height:10.56px;color:#1c1c1c;transform:scaleX(0.8784);">Throughput &gt;&gt;</span>
<span style="left:499.00px;top:1239.82px;font-size:8.8px;line-height:10.56px;color:#1c1c1c;transform:scaleX(0.8491);">0.000 Kbps</span>
<div style="left:566.30px;top:1220.70px;width:78.00px;height:49.90px;background:#000;"></div>
<span style="left:576.80px;top:1222.14px;font-size:7.6000000000000005px;line-height:9.12px;color:#d4d4d4;transform:scaleX(0.9819);">Max</span>
<span style="left:574.80px;top:1246.04px;font-size:8.6px;line-height:10.32px;color:#f0f0f0;transform:scaleX(0.8784);">1.632</span>
<span style="left:574.80px;top:1257.94px;font-size:8.6px;line-height:10.32px;color:#f0f0f0;transform:scaleX(0.8268);">Kbps</span>
<div style="left:641.90px;top:1221.80px;width:1.40px;height:48.90px;background:#3ad64a;"></div>
<div style="left:607.40px;top:1265.00px;width:1.40px;height:5.70px;background:#3cdc4c;"></div>
<div style="left:614.80px;top:1265.00px;width:1.40px;height:5.70px;background:#3cdc4c;"></div>
<div style="left:621.80px;top:1265.00px;width:1.40px;height:5.70px;background:#3cdc4c;"></div>
<div style="left:628.80px;top:1265.00px;width:1.40px;height:5.70px;background:#3cdc4c;"></div>
<div style="left:636.20px;top:1265.00px;width:1.40px;height:5.70px;background:#3cdc4c;"></div>
<div style="left:639.90px;top:1263.90px;width:2.00px;height:6.80px;background:#22e83a;"></div>
<span style="left:430.90px;top:1271.72px;font-size:8.8px;line-height:10.56px;color:#1c1c1c;transform:scaleX(0.8617);">Receive</span>
<div style="left:463.60px;top:1278.05px;width:180.40px;height:1.05px;background:#adaa98;"></div>
<div style="left:463.60px;top:1279.10px;width:180.40px;height:0.80px;background:#f6f5ec;"></div>
<span style="left:447.60px;top:1285.62px;font-size:8.8px;line-height:10.56px;color:#1c1c1c;transform:scaleX(0.8211);">Link Speed &gt;&gt;</span>
<span style="left:499.40px;top:1285.62px;font-size:8.8px;line-height:10.56px;color:#1c1c1c;transform:scaleX(0.8263);">1.0 Mbps</span>
<span style="left:443.50px;top:1300.92px;font-size:8.8px;line-height:10.56px;color:#1c1c1c;transform:scaleX(0.8784);">Throughput &gt;&gt;</span>
<span style="left:499.00px;top:1300.92px;font-size:8.8px;line-height:10.56px;color:#1c1c1c;transform:scaleX(0.8632);">118.144 Kbps</span>
<div style="left:566.30px;top:1282.20px;width:78.00px;height:49.30px;background:#000;"></div>
<span style="left:576.80px;top:1283.34px;font-size:7.6000000000000005px;line-height:9.12px;color:#d4d4d4;transform:scaleX(0.9819);">Max</span>
<span style="left:569.80px;top:1307.04px;font-size:8.6px;line-height:10.32px;color:#f0f0f0;transform:scaleX(0.8913);">195.136</span>
<span style="left:574.80px;top:1318.94px;font-size:8.6px;line-height:10.32px;color:#f0f0f0;transform:scaleX(0.8268);">Kbps</span>
<svg style="left:601px;top:1282px" width="44" height="50" viewBox="0 0 44 50"><path d="M0.9 49.4 L0.9 20.2 L1.8 20.2 L2.0 24.7 L3.6 24.7 L4.2 22.8 L7.6 22.6 L8.0 20.6 L9.4 20.6 L9.8 22.6 L13.0 22.9 L16.6 23.0 L16.8 22.0 L18.0 22.0 L18.6 23.6 L20.4 25.0 L22.0 27.0 L22.6 27.8 L25.6 27.8 L26.4 26.4 L27.2 24.6 L28.2 24.6 L28.6 25.8 L31.2 25.8 L31.4 24.6 L32.4 24.6 L32.8 27.2 L35.2 27.2 L35.6 25.4 L38.0 25.4 L40.0 25.0 L41.0 25.0 L41.0 49.4 Z" fill="#fbf800"/><rect x="41" y="0.8" width="1.3" height="48.6" fill="#f0e878"/></svg>
</body></html>
